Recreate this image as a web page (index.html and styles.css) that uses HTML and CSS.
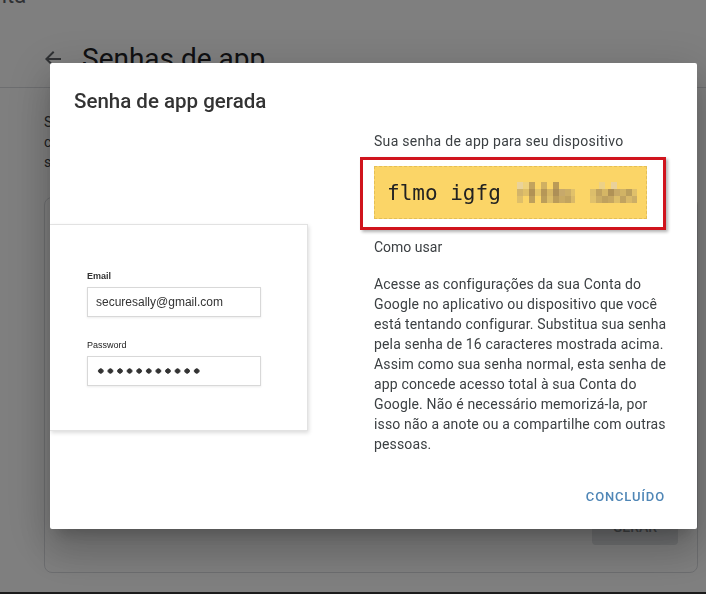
FILE: index.html
```html
<!DOCTYPE html>
<html lang="pt-BR">
<head>
    <meta charset="UTF-8">
    <meta name="viewport" content="width=device-width, initial-scale=1.0">
    <title>Senhas de app</title>
    <link rel="stylesheet" href="styles.css">
</head>
<body>
    <div class="page">
        <div class="crumb"><span>Conta</span></div>
        <header class="page-header">
            <svg class="back" width="24" height="24" viewBox="0 0 24 24"><path d="M20 11H7.83l5.59-5.59L12 4l-8 8 8 8 1.41-1.41L7.83 13H20v-2z"/></svg>
            <h1>Senhas de app</h1>
        </header>
        <p class="intro">
            Senhas de app permitem que você faça login na sua Conta do Google em apps<br>
            com suporte à verificação em duas etapas.<br>
            só precisará digitar a senha uma vez.
        </p>
        <section class="card">
            <button class="gen-btn">GERAR</button>
        </section>
    </div>

    <div class="overlay">
        <div class="dialog">
            <h2 class="dialog-title">Senha de app gerada</h2>
            <div class="dialog-body">
                <div class="illustration">
                    <div class="login-card">
                        <div class="field-label">Email</div>
                        <div class="fake-input">securesally@gmail.com</div>
                        <div class="field-label second">Password</div>
                        <div class="fake-input"><span class="dots"></span></div>
                    </div>
                </div>
                <div class="info">
                    <div class="info-label">Sua senha de app para seu dispositivo</div>
                    <div class="highlight">
                        <div class="app-password">
                            <span>flmo igfg</span>
                            <svg class="mosaic" width="122" height="21" viewBox="0 0 122 21">
                                <rect x="0" y="0" width="6" height="7" fill="#ead39a"/>
                                <rect x="6" y="0" width="6" height="7" fill="#efd27c"/>
                                <rect x="12" y="0" width="6" height="7" fill="#c2a35e"/>
                                <rect x="24" y="0" width="6" height="7" fill="#d0b062"/>
                                <rect x="36" y="0" width="6" height="7" fill="#bb9b57"/>
                                <rect x="0" y="7" width="6" height="7" fill="#d2b46a"/>
                                <rect x="6" y="7" width="6" height="7" fill="#dfbf68"/>
                                <rect x="12" y="7" width="6" height="7" fill="#b19255"/>
                                <rect x="18" y="7" width="6" height="7" fill="#e4c56a"/>
                                <rect x="24" y="7" width="6" height="7" fill="#b69757"/>
                                <rect x="30" y="7" width="6" height="7" fill="#d6b664"/>
                                <rect x="36" y="7" width="6" height="7" fill="#ad8f57"/>
                                <rect x="42" y="7" width="6" height="7" fill="#c7a96b"/>
                                <rect x="48" y="7" width="6" height="7" fill="#ccae66"/>
                                <rect x="54" y="7" width="4" height="7" fill="#e1c16a"/>
                                <rect x="0" y="14" width="6" height="7" fill="#dfbf69"/>
                                <rect x="12" y="14" width="6" height="7" fill="#bea05c"/>
                                <rect x="24" y="14" width="6" height="7" fill="#bc9e5a"/>
                                <rect x="30" y="14" width="6" height="7" fill="#dcbd68"/>
                                <rect x="36" y="14" width="6" height="7" fill="#bb9c5a"/>
                                <rect x="42" y="14" width="6" height="7" fill="#c9aa63"/>
                                <rect x="48" y="14" width="6" height="7" fill="#c1a35f"/>
                                <rect x="54" y="14" width="4" height="7" fill="#dab968"/>
                                <rect x="82" y="0" width="6" height="7" fill="#ecd187"/>
                                <rect x="94" y="0" width="6" height="7" fill="#e9d19b"/>
                                <rect x="73" y="7" width="6" height="7" fill="#dcbe6b"/>
                                <rect x="79" y="7" width="6" height="7" fill="#c0a25f"/>
                                <rect x="85" y="7" width="6" height="7" fill="#d5b665"/>
                                <rect x="91" y="7" width="6" height="7" fill="#b09256"/>
                                <rect x="97" y="7" width="6" height="7" fill="#c8aa67"/>
                                <rect x="103" y="7" width="6" height="7" fill="#d1b365"/>
                                <rect x="109" y="7" width="6" height="7" fill="#bb9f5d"/>
                                <rect x="115" y="7" width="5" height="7" fill="#e0c06a"/>
                                <rect x="73" y="14" width="6" height="7" fill="#e0c16b"/>
                                <rect x="79" y="14" width="6" height="7" fill="#cbad64"/>
                                <rect x="85" y="14" width="6" height="7" fill="#bfa15e"/>
                                <rect x="91" y="14" width="6" height="7" fill="#c6a761"/>
                                <rect x="97" y="14" width="6" height="7" fill="#ddbe69"/>
                                <rect x="103" y="14" width="6" height="7" fill="#c1a360"/>
                                <rect x="109" y="14" width="6" height="7" fill="#d9b968"/>
                                <rect x="115" y="14" width="5" height="7" fill="#ccae66"/>
                            </svg>
                        </div>
                    </div>
                    <div class="how">Como usar</div>
                    <p class="how-text">
                        Acesse as configurações da sua Conta do<br>
                        Google no aplicativo ou dispositivo que você<br>
                        está tentando configurar. Substitua sua senha<br>
                        pela senha de 16 caracteres mostrada acima.<br>
                        Assim como sua senha normal, esta senha de<br>
                        app concede acesso total à sua Conta do<br>
                        Google. Não é necessário memorizá-la, por<br>
                        isso não a anote ou a compartilhe com outras<br>
                        pessoas.
                    </p>
                </div>
            </div>
            <div class="dialog-actions">
                <button class="btn-text">CONCLUÍDO</button>
            </div>
        </div>
    </div>
</body>
</html>
```

FILE: styles.css
```css
* {
    margin: 0;
    padding: 0;
    box-sizing: border-box;
}

html {
    background: #1c1c1c;
}

body {
    font-family: Roboto, 'Noto Sans', sans-serif;
    color: #3c4043;
}

/* Pagina por tras do dialogo */
.page {
    background: white;
    height: 592px;
    overflow: hidden;
}

.crumb {
    height: 9px;
    overflow: hidden;
    display: flex;
    align-items: flex-end;
    margin-left: -32px;
}

.crumb span {
    font-size: 22px;
    line-height: 26px;
    color: #5f6368;
}

.page-header {
    display: flex;
    align-items: center;
    gap: 17px;
    height: 79px;
    padding: 22px 0 0 41px;
    border-bottom: 1px solid #dadce0;
}

.back {
    fill: #5f6368;
}

.page-header h1 {
    font-size: 28px;
    font-weight: 400;
    line-height: 36px;
    color: #202124;
}

.intro {
    font-size: 14px;
    line-height: 20px;
    padding: 24px 0 0 44px;
    white-space: nowrap;
}

.card {
    margin: 25px 8px 0 44px;
    height: 376px;
    border: 1px solid #dadce0;
    border-radius: 8px;
    display: flex;
    flex-direction: column;
    justify-content: flex-end;
    align-items: flex-end;
    padding: 0 19px 27px 0;
}

.gen-btn {
    width: 86px;
    height: 36px;
    border: none;
    border-radius: 4px;
    background: #e2e4e7;
    color: #80868b;
    font-family: Roboto, sans-serif;
    font-size: 14px;
    font-weight: 500;
}

/* Dialogo */
.overlay {
    position: fixed;
    top: 0;
    left: 0;
    right: 0;
    height: 592px;
    background: rgba(0, 0, 0, 0.5);
    padding: 63px 0 0 50px;
}

.dialog {
    width: 647px;
    height: 466px;
    background: white;
    border-radius: 2px;
    overflow: hidden;
    box-shadow: 0 11px 15px -7px rgba(0, 0, 0, 0.2),
                0 24px 38px 3px rgba(0, 0, 0, 0.14),
                0 9px 46px 8px rgba(0, 0, 0, 0.12);
}

.dialog-title {
    font-size: 20.5px;
    font-weight: 500;
    line-height: 28px;
    color: #333;
    padding: 24px 24px 0;
}

.dialog-body {
    display: flex;
    gap: 66px;
    margin-top: 16px;
}

.illustration {
    width: 258px;
    flex-shrink: 0;
    padding-top: 93px;
}

.login-card {
    font-family: 'Liberation Sans', Arial, sans-serif;
    background: white;
    border: 1px solid #e2e2e2;
    border-left: none;
    box-shadow: 1px 2px 4px rgba(0, 0, 0, 0.14);
    height: 207px;
    padding: 45px 0 0 37px;
}

.field-label {
    font-size: 9px;
    font-weight: 700;
    line-height: 12px;
    color: #333;
    margin-bottom: 5px;
}

.field-label.second {
    margin-top: 22px;
    font-weight: 400;
    color: #222;
}

.fake-input {
    width: 174px;
    height: 30px;
    border: 1px solid #d8d8d8;
    box-shadow: 0 1px 2px rgba(0, 0, 0, 0.08);
    padding-left: 8px;
    font-size: 12px;
    color: #333;
    display: flex;
    align-items: center;
}

.dots {
    width: 106px;
    height: 10px;
    background: radial-gradient(circle, #333 2.4px, transparent 2.9px) 0 0 / 9.6px 10px repeat-x;
}

.info {
    width: 299px;
}

.info-label {
    font-size: 14px;
    line-height: 20px;
    letter-spacing: 0.3px;
    color: #3c4043;
}

.highlight {
    margin: 6px 0 0 -14px;
    width: 306px;
    border: 3px solid #d0141d;
    padding: 6px 16px 8px 11px;
    box-shadow: 2px 2px 3px rgba(0, 0, 0, 0.3);
}

.app-password {
    height: 53px;
    background: #fbd567;
    border: 1px dashed #e4bf57;
    display: flex;
    align-items: center;
    gap: 16px;
    padding-left: 12px;
    font-family: 'DejaVu Sans Mono', monospace;
    font-size: 21px;
    color: #222;
}

.mosaic {
    display: block;
}

.how {
    font-size: 14px;
    line-height: 20px;
    margin-top: 7px;
}

.how-text {
    font-size: 14px;
    line-height: 20px;
    letter-spacing: 0.15px;
    margin-top: 17px;
    white-space: nowrap;
}

.dialog-actions {
    display: flex;
    justify-content: flex-end;
    padding: 24px 24px 0;
}

.btn-text {
    height: 36px;
    padding: 0 8px;
    border: none;
    background: transparent;
    font-family: Roboto, sans-serif;
    font-size: 13px;
    font-weight: 500;
    letter-spacing: 0.85px;
    color: #4f86b6;
    cursor: pointer;
}
```
